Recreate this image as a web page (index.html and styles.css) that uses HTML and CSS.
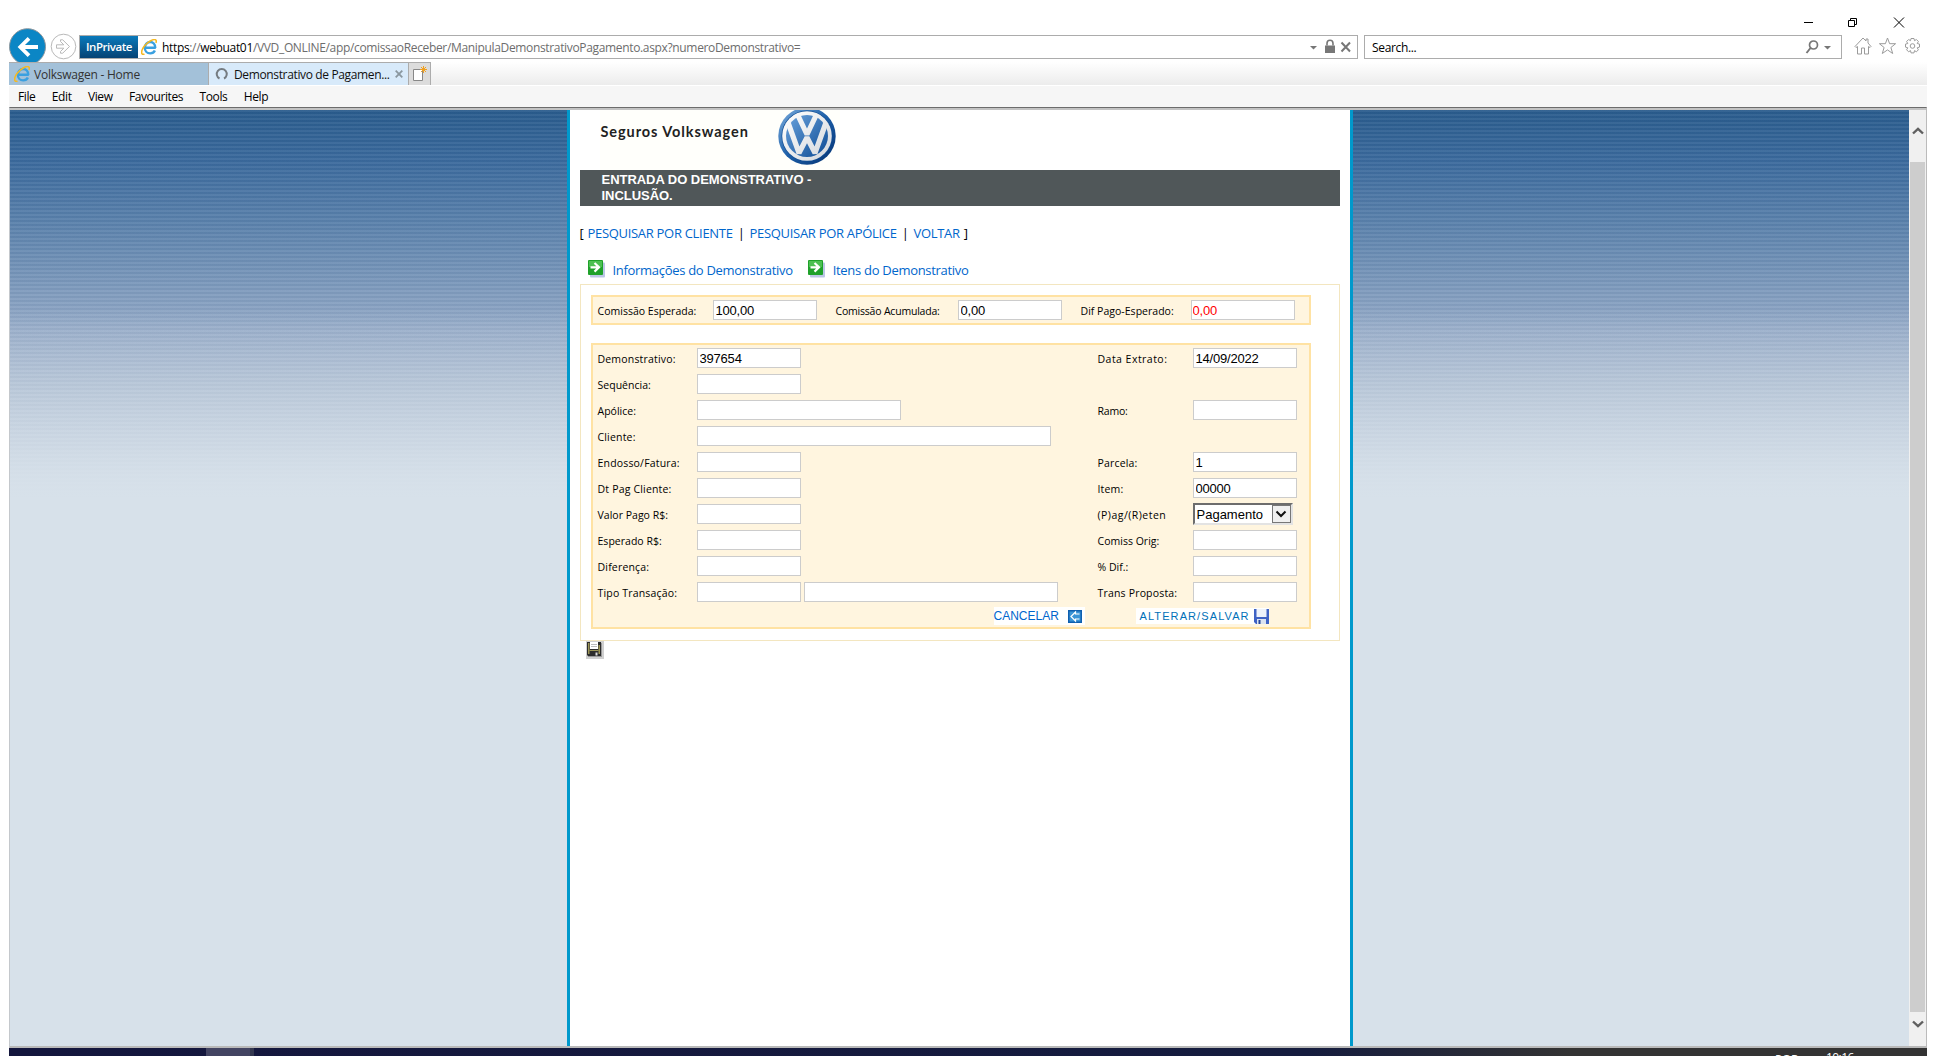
FILE: index.html
```html
<!DOCTYPE html>
<html lang="pt-BR">
<head>
<meta charset="utf-8">
<title>Demonstrativo de Pagamento</title>
<link rel="stylesheet" href="styles.css">
</head>
<body>
<svg width="0" height="0" class="defs">
  <defs>
    <linearGradient id="vwRing" x1="0" y1="0" x2="1" y2="1"><stop offset="0" stop-color="#7fb0e0"/><stop offset=".5" stop-color="#1d5fa8"/><stop offset="1" stop-color="#03306f"/></linearGradient>
    <linearGradient id="vwDisk" x1="0" y1="0" x2="1" y2="1"><stop offset="0" stop-color="#6ba3dc"/><stop offset="1" stop-color="#0c4a94"/></linearGradient>
    <linearGradient id="vwSilver" gradientUnits="userSpaceOnUse" x1="5" y1="5" x2="53" y2="53"><stop offset="0" stop-color="#ffffff"/><stop offset="1" stop-color="#d3d7dc"/></linearGradient>
    <symbol id="ie" viewBox="0 0 16 16">
      <path d="M4 8.700H14.800M14.300 9C14.300 5.200 12 3 9.200 3S3.800 5.400 3.800 8.700s2.200 5.700 5.400 5.700c2.200 0 3.900-1 4.700-2.800" fill="none" stroke="#3aa0e0" stroke-width="2.400"/>
      <path d="M3.500 15.200C-.2 16.300-.4 12 3.200 7.300 6.800 2.600 13 -.6 14.800 1c.7.700.6 1.700.1 2.900" fill="none" stroke="#f5b923" stroke-width="1.600"/>
    </symbol>
    <symbol id="go" viewBox="0 0 18 18">
      <rect x="2" y="2.500" width="15" height="15" rx="1" fill="#aab8de" opacity=".8"/>
      <rect x="0" y="0" width="15" height="15" rx="1" fill="#1fa12a"/><rect x="1" y="1" width="13" height="6" fill="#4cc052"/>
      <path d="M2.500 7.300h8M6.500 3l4.500 4.300-4.500 4.300" fill="none" stroke="#fff" stroke-width="2.200"/>
    </symbol>
  </defs>
</svg>
<div class="window">
  <div class="caption">
    <svg width="108" height="20" viewBox="0 0 108 20" fill="none" stroke="#000">
      <path d="M4 11.500h9M48.500 9.500h6v6h-6zM50.500 9.500v-2h6v6h-2M94 6.500l10 10M104 6.500l-10 10"/>
    </svg>
  </div>
  <div class="toolbar">
    <svg class="back" width="37" height="34" viewBox="0 0 37 34"><circle cx="18.500" cy="18.700" r="18" fill="#0b86c5" stroke="#8d979e"/><path d="M29 19H11.500M20 10.300L11.300 19l8.700 8.700" fill="none" stroke="#fff" stroke-width="3.800"/></svg>
    <svg class="forward" width="27" height="27" viewBox="0 0 27 27" fill="none" stroke="#b9b9b9"><circle cx="13.500" cy="13.500" r="12.300"/><path d="M6.500 11.800h7.300L10.500 8.500V6.800h2.200l6.800 6.700-6.800 6.700h-2.200v-1.700l3.300-3.300H6.500z"/></svg>
    <div class="address">
      <span class="inprivate">InPrivate</span>
      <svg width="16" height="16"><use href="#ie"/></svg>
      <span class="url"><b>https</b>://<b>webuat01</b>/VVD_ONLINE/app/comissaoReceber/ManipulaDemonstrativoPagamento.aspx?numeroDemonstrativo=</span>
      <svg class="addr-icons" width="44" height="16" viewBox="0 0 44 16"><path d="M1 7h7l-3.500 3.500z" fill="#777"/><rect x="16" y="6.500" width="10" height="7.500" fill="#777"/><path d="M18 6.500V4.500a3 3.200 0 0 1 6 0v2" fill="none" stroke="#777" stroke-width="1.600"/><path d="M32.500 3.500l8.500 9M41 3.500l-8.500 9" stroke="#777" stroke-width="2"/></svg>
    </div>
    <div class="search"><span>Search...</span>
      <svg width="28" height="16" viewBox="0 0 28 16"><circle cx="9.500" cy="6" r="4" fill="none" stroke="#777" stroke-width="1.700"/><path d="M6.500 9L2.500 14" stroke="#777" stroke-width="2"/><path d="M20 7h7l-3.500 3.500z" fill="#777"/></svg>
    </div>
    <svg class="tools" width="68" height="20" viewBox="0 0 68 20" fill="none" stroke="#9b9b9b">
      <path d="M1 10.500L9 2l3 3V3h2v4l3 3.500-1 1-1.500-1V18h-4v-6H7.500v6h-4v-7.500L2 11.500z"/>
      <path d="M33.500 2l2.100 5.700h6l-4.700 3.800 1.800 6-5.200-3.600-5.200 3.600 1.800-6-4.700-3.800h6z"/>
      <circle cx="58.500" cy="10" r="2.300"/><path d="M57 2.500h3l.5 2.200 1.900-1.200 2 2-1.200 2 2.300.6v3l-2.300.7 1.200 2-2 2-1.900-1.200-.5 2.300h-3l-.5-2.300-1.900 1.200-2-2 1.200-2-2.300-.7v-3l2.300-.6-1.200-2 2-2 1.900 1.200z"/>
    </svg>
  </div>
  <div class="tabs">
    <div class="tab"><svg width="16" height="16"><use href="#ie"/></svg><span class="loose">Volkswagen - Home</span></div>
    <div class="tab active"><svg width="14" height="14" viewBox="0 0 14 14" fill="none" stroke="#757c82" stroke-width="2"><path d="M4.500 11.500a5 5 0 1 1 4.500 0"/></svg><span>Demonstrativo de Pagamen...</span><svg class="close" width="8" height="8" viewBox="0 0 8 8"><path d="M.7.7l6.600 6.600M7.300.7L.7 7.300" stroke="#8a979f" stroke-width="1.800"/></svg></div>
    <div class="newtab"><svg width="16" height="16" viewBox="0 0 16 16"><path d="M1.500 3.500h9v11h-9z" fill="#fff" stroke="#888"/><path d="M11.500 0v7M8 3.500h7M9 1l5 5M14 1L9 6" stroke="#f0a020"/></svg></div>
  </div>
  <div class="menu"><span>File</span><span>Edit</span><span>View</span><span>Favourites</span><span>Tools</span><span>Help</span></div>
  <div class="viewport">
    <div class="canvas">
      <main class="page">
        <div class="brand">
          <span>Seguros Volkswagen</span>
          <svg width="58" height="56" viewBox="0 3 58 56">
            <circle cx="29" cy="29" r="28.700" fill="url(#vwRing)"/><circle cx="29" cy="29" r="25.500" fill="#0f4d94"/><circle cx="29" cy="29" r="24.800" fill="url(#vwSilver)"/><circle cx="29" cy="29" r="21" fill="url(#vwDisk)"/>
            <g fill="none" stroke="url(#vwSilver)" stroke-width="5.200" stroke-linejoin="bevel"><path d="M20 8.500L29 27.500l9-19"/><path d="M10 15.500L21 46 29 30.500 37 46 48 15.500"/></g>
          </svg>
        </div>
        <h1>ENTRADA DO DEMONSTRATIVO -<br>INCLUSÃO.</h1>
        <nav class="links">[<a>PESQUISAR POR CLIENTE</a><i>|</i><a>PESQUISAR POR APÓLICE</a><i>|</i><a>VOLTAR</a><i class="end">]</i></nav>
        <div class="sections">
          <svg width="18" height="18"><use href="#go"/></svg><a>Informações do Demonstrativo</a>
          <svg width="18" height="18"><use href="#go"/></svg><a>Itens do Demonstrativo</a>
        </div>
        <form class="panel">
          <div class="box totals">
            <label>Comissão Esperada:</label><input value="100,00">
            <label class="tight">Comissão Acumulada:</label><input value="0,00">
            <label>Dif Pago-Esperado:</label><input class="neg" value="0,00">
          </div>
          <div class="box details">
            <div class="fields">
              <label>Demonstrativo:</label><div><input value="397654"></div><label class="wide">Data Extrato:</label><input value="14/09/2022">
              <label class="plain">Sequência:</label><div><input></div><span></span><span></span>
              <label class="plain">Apólice:</label><div><input class="w204"></div><label class="tight">Ramo:</label><input>
              <label>Cliente:</label><div><input class="w354"></div><span></span><span></span>
              <label>Endosso/Fatura:</label><div><input></div><label>Parcela:</label><input value="1">
              <label>Dt Pag Cliente:</label><div><input></div><label>Item:</label><input value="00000">
              <label class="plain">Valor Pago R$:</label><div><input></div><label class="wide">(P)ag/(R)eten</label><div class="select"><span>Pagamento</span><i><svg width="12" height="8" viewBox="0 0 12 8"><path d="M1.500 1.500L6 6l4.500-4.500" fill="none" stroke="#111" stroke-width="2"/></svg></i></div>
              <label class="plain">Esperado R$:</label><div><input></div><label class="plain">Comiss Orig:</label><input>
              <label>Diferença:</label><div><input></div><label class="plain">% Dif.:</label><input>
              <label>Tipo Transação:</label><div><input><input class="w254"></div><label>Trans Proposta:</label><input>
            </div>
            <div class="actions">
              <a class="cancel">CANCELAR<svg width="14" height="13" viewBox="0 0 14 13"><rect width="14" height="13" fill="#0f5faf"/><rect x="1.500" y="1.500" width="11" height="10" fill="#3a94d6"/><path d="M11.500 4H7.500V2L3 6.500 7.500 11V9h4" fill="none" stroke="#fff" stroke-width="1.200"/></svg></a>
              <a class="save">ALTERAR/SALVAR<svg width="15" height="15" viewBox="0 0 15 15"><path d="M0 0h15v15H2l-2-2z" fill="#3f62c4"/><path d="M2.500 0h10v8h-10z" fill="#eef2fa"/><path d="M3 10h9v5H3z" fill="#dce3f0"/><path d="M4.500 11h2v4h-2z" fill="#27479c"/></svg></a>
            </div>
          </div>
        </form>
        <svg class="disk" width="18" height="18" viewBox="0 0 18 18"><path d="M0 0h18v18H0z" fill="#d0d0d0"/><path d="M2 2h14v14H2z" fill="#999"/><path d="M1 1h14v14H2l-1-1z" fill="#2c2c2c"/><path d="M2 2h1.500v11H2zM12.500 4H14v9h-1.500z" fill="#9b9455"/><path d="M4 1h8v7H4z" fill="#fff"/><path d="M5 3.500h6M5 5.500h6" stroke="#bbb"/><path d="M3.500 9h9v1h-9z" fill="#9b9455"/><path d="M9.500 11.500h2v3h-2z" fill="#ddd"/></svg>
      </main>
    </div>
    <div class="scrollbar">
      <svg width="12" height="8" viewBox="0 0 12 8"><path d="M1 6.500L6 1.800l5 4.700" fill="none" stroke="#606060" stroke-width="2.400"/></svg>
      <div class="thumb"></div>
      <svg width="12" height="8" viewBox="0 0 12 8"><path d="M1 1.500l5 4.700 5-4.700" fill="none" stroke="#606060" stroke-width="2.400"/></svg>
    </div>
  </div>
  <div class="taskbar"><span class="task"></span><span class="lang">POR</span><span class="clock">10:16</span></div>
</div>
</body>
</html>
```
FILE: styles.css
```css
* { box-sizing: border-box; }
body { margin: 0; width: 1936px; height: 1056px; overflow: hidden; background: #fff; font: 12px "Open Sans", "Noto Sans", sans-serif; color: #000; }
.defs { position: absolute; }
svg { display: block; flex: none; }
span, a, label { white-space: nowrap; }
.window { margin-left: 9px; width: 1918px; height: 1056px; display: flex; flex-direction: column; }
.caption { height: 28px; padding: 11px 19px 0 0; display: flex; justify-content: flex-end; }
.toolbar { height: 34px; display: flex; align-items: flex-start; letter-spacing: -.34px; }
.forward { margin: 5px 0 0 4px; }
.address { margin: 7px 0 0 2px; width: 1279px; height: 24px; border: 1px solid #acacac; display: flex; align-items: center; }
.inprivate { width: 58px; height: 22px; margin-right: 3px; background: linear-gradient(#0a7abb, #064374); color: #fff; font-weight: 600; font-size: 11.500px; letter-spacing: -.45px; line-height: 22px; text-align: center; }
.url { margin-left: 5px; color: #6d6d6d; }
.url b { font-weight: 400; color: #000; }
.addr-icons { margin: 0 4px 0 auto; }
.search { margin: 7px 0 0 6px; width: 478px; height: 24px; border: 1px solid #acacac; padding: 0 9px 0 7px; display: flex; align-items: center; justify-content: space-between; }
.tools { margin: 8px 0 0 12px; }
.tabs { height: 24px; display: flex; background: linear-gradient(#fff, #ececec); border-bottom: 1px solid #fff; letter-spacing: -.36px; }
.tab { width: 200px; border: solid #acacac; border-width: 1px 1px 0 0; background: #a3c1d9; display: flex; align-items: center; padding-left: 5px; gap: 4px; color: #333; }
.tab .loose { letter-spacing: -.24px; }
.tab.active { background: #d8eafa; color: #111; padding-left: 6px; gap: 5px; }
.newtab { width: 22px; border: solid #acacac; border-width: 1px 1px 0 0; background: #dcdcdc; padding: 3px 0 0 3px; }
.menu { height: 21px; background: #f6f6f6; display: flex; align-items: center; padding: 0 0 0 9px; gap: 16.300px; letter-spacing: -.38px; }
.viewport { height: 941px; border-top: 1px solid #6c6c6c; border-left: 1px solid #c4c8cc; border-right: 1px solid #bbb; border-bottom: 2px solid #b9b9b9; box-shadow: inset 0 2px #c3c3c3; padding-top: 2px; display: flex; }
.canvas { flex: 1; display: flex; justify-content: center; background: linear-gradient(transparent 200px, #d7e1ea 390px), repeating-linear-gradient(rgba(215,225,234,.07) 0 2px, rgba(30,60,90,.05) 2px 4px), linear-gradient(#295b8c 0, #3a699c 50px, #6488b0 130px, #96abc8 220px, #a8b9cf 280px, #b8c6d8 335px, #d7e1ea 390px); }
.page { width: 786px; border: solid #0099cc; border-width: 0 3px; background: #fff; padding: 0 10px; display: flex; flex-direction: column; }
.brand { height: 60px; margin-left: 20px; width: 240px; padding-left: 1px; background: #fffffb; display: flex; font: 700 14.500px Lato, sans-serif; letter-spacing: .92px; color: #222; }
.brand span { margin-top: 13px; width: 177px; line-height: 18px; }
h1 { margin: 0; height: 36px; padding: 2px 0 0 22px; background: #505759; color: #fff; font: 700 13px/16px "Liberation Sans", Arial, sans-serif; letter-spacing: -.04px; }
.links { margin-top: 17px; height: 20px; line-height: 20px; display: flex; font-size: 13px; letter-spacing: -.3px; }
.links a { margin-left: 4px; }
.links i { margin: 0 1px 0 5px; font-style: normal; }
.links .end { margin: 0 0 0 4px; }
a { color: #0066cc; }
.sections { margin-top: 13px; height: 28px; padding: 0 0 2px 8px; display: flex; align-items: center; font-size: 13px; letter-spacing: -.3px; }
.sections a { margin: 1px 15px 0 7px; }
.panel { height: 357px; border: 1px solid #f3e6c0; padding: 10px; }
.box { width: 720px; border: 2px solid #ffe2a3; background: #fff5df; font-size: 10.500px; }
.box label { padding-top: 1px; letter-spacing: .18px; }
.totals label, .box .plain { letter-spacing: .02px; }
.box .tight { letter-spacing: -.2px; }
.box .wide { letter-spacing: .47px; }
.totals { height: 30px; display: flex; align-items: center; padding-left: 5px; }
.totals label { width: 115px; }
.totals label:nth-of-type(2) { width: 122px; margin-left: 19px; }
.totals label:nth-of-type(3) { width: 110px; margin-left: 19px; }
input { display: block; width: 104px; height: 20px; border: 1px solid #ccc; background: #fff; padding: 0 2px; font: 13px "Liberation Sans", Arial, sans-serif; letter-spacing: -.2px; color: #000; border-radius: 0; }
.neg { color: #f00; padding-left: 1px; }
.w204 { width: 204px; } .w354 { width: 354px; } .w254 { width: 254px; }
.details { margin-top: 18px; height: 286px; }
.fields { padding-left: 5px; display: grid; grid-template-columns: 99px 401px 95px 104px; grid-auto-rows: 26px; align-items: center; }
.fields > div { display: flex; gap: 3px; }
.fields > .select { width: 100px; height: 22px; border: 2px solid #6d6d6d; border-right-color: #e3e3e3; border-bottom-color: #e3e3e3; background: #fff; font: 13px/19px "Liberation Sans", Arial, sans-serif; padding-left: 2px; justify-content: space-between; }
.select i { width: 19px; height: 18px; background: #f0f0f0; border: 1px solid #777; display: grid; place-items: center; }
.actions { height: 22px; display: flex; align-items: center; padding-left: 401px; font: 12px/18px "Liberation Sans", Arial, sans-serif; }
.actions a { height: 18px; background: #fff; display: flex; align-items: center; }
.cancel { width: 91px; gap: 9px; }
.actions .save { width: 133px; height: 16px; margin-left: 51px; padding-left: 4px; gap: 4px; color: #0070b8; font-size: 11px; letter-spacing: 1.100px; }
.disk { margin: 0 0 0 6px; }
.scrollbar { width: 17px; background: #f0f0f0; padding: 17px 1px; display: flex; flex-direction: column; align-items: center; }
.thumb { width: 15px; height: 850px; margin: 27px 0 8px; background: #cdcdcd; }
.taskbar { height: 8px; overflow: hidden; background: linear-gradient(90deg, #14163d 0, #151c3e 1300px, #333 1560px); display: flex; color: #fff; font-size: 12px; line-height: 17px; }
.task { width: 48px; height: 8px; margin-left: 197px; background: #434462; border-right: 4px solid #33374f; }
.lang { margin-left: 1521px; padding-top: 3px; letter-spacing: -.3px; } .clock { margin-left: 28px; padding-top: 1px; letter-spacing: -.6px; }
```
